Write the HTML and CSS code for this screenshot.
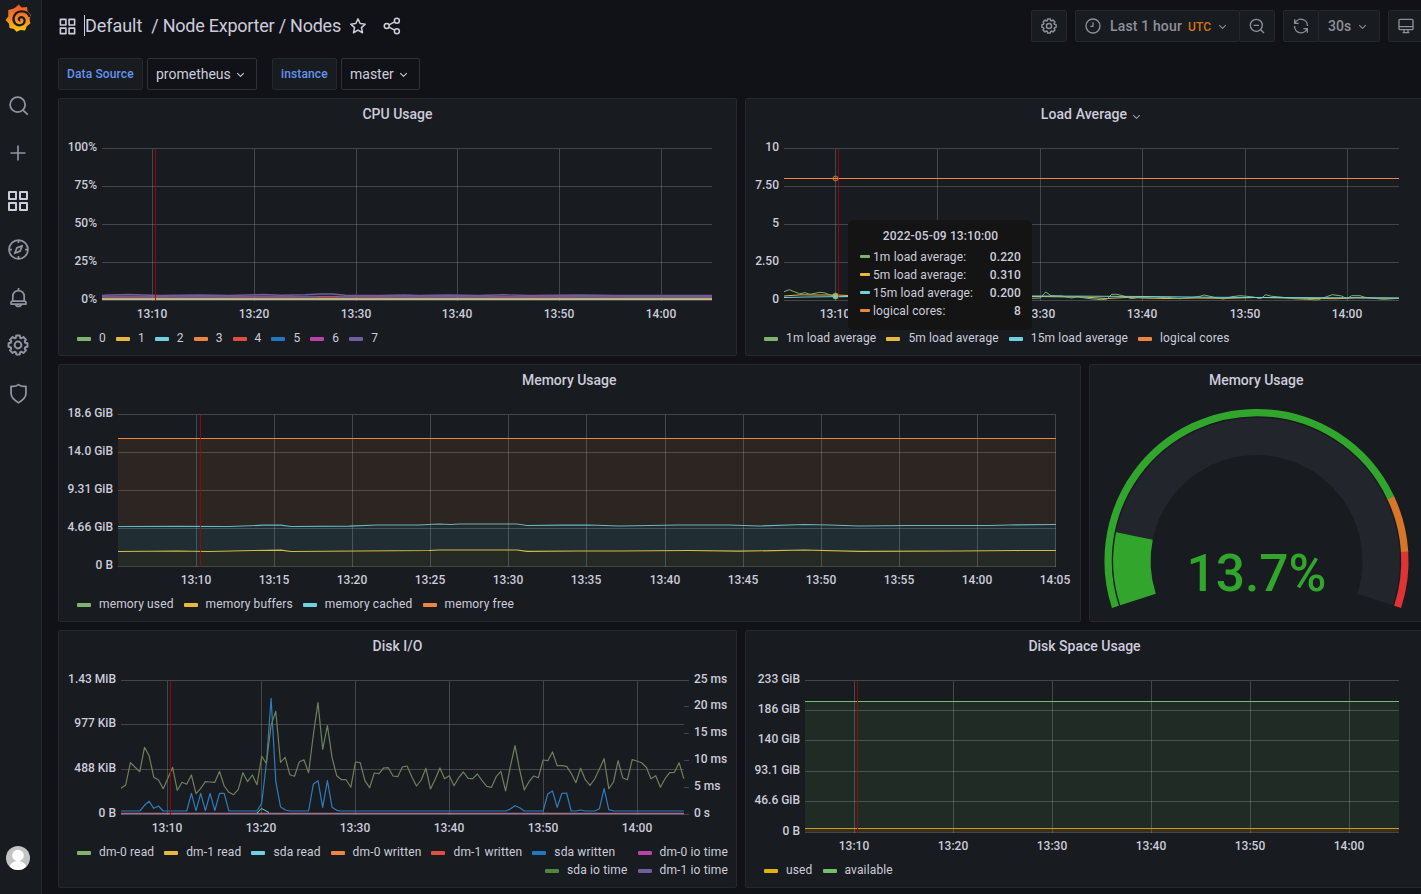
FILE: index.html
```
<!DOCTYPE html>
<html lang="en">
<head>
    <title>Node Exporter / Nodes - Grafana</title>
    <meta charset="UTF-8">
    <link rel="stylesheet" href="styles.css">
</head>
<body>
    <!-- Icon set -->
    <svg class="icon-defs">
        <symbol id="i-apps" viewBox="0 0 24 24"><path d="M3 3h7v7H3zM14 3h7v7h-7zM3 14h7v7H3zM14 14h7v7h-7z"/></symbol>
        <symbol id="i-search" viewBox="0 0 24 24"><circle cx="11" cy="11" r="8.6"/><path d="M17.2 17.2L22.5 22.5"/></symbol>
        <symbol id="i-plus" viewBox="0 0 24 24"><path d="M12 3v18M3 12h18"/></symbol>
        <symbol id="i-compass" viewBox="0 0 24 24"><circle cx="12" cy="12" r="10.8"/><path d="M12 1v3.5M12 19.5V23M1 12h3.500M19.500 12H23M16.300 7.700L13.800 13.800 7.700 16.300 10.200 10.200z"/></symbol>
        <symbol id="i-bell" viewBox="0 0 24 24"><path d="M12 1v3M5.500 16v-5.500a6.500 6.500 0 0 1 13 0V16M5 16h14a1.500 1.500 0 0 1 1.500 1.500V19.500h-17V17.500A1.500 1.500 0 0 1 5 16zM8.500 19.500a3.600 3.600 0 0 0 7 0"/></symbol>
        <symbol id="i-cog" viewBox="-12 -12 24 24">
            <path d="M9.420 1.830L7.270 2.220 6.710 3.570 7.960 5.370 5.370 7.960 3.570 6.710 2.220 7.270 1.830 9.420H-1.830L-2.220 7.270-3.570 6.710-5.370 7.960-7.960 5.370-6.710 3.570-7.270 2.220-9.420 1.830V-1.830L-7.270-2.220-6.710-3.570-7.960-5.370-5.370-7.960-3.570-6.710-2.220-7.270-1.830-9.420H1.830L2.220-7.270 3.570-6.710 5.370-7.960 7.960-5.370 6.710-3.570 7.270-2.220 9.420-1.830z"/>
            <circle r="3.4"/>
        </symbol>
        <symbol id="i-shield" viewBox="0 0 24 24"><path d="M12 1.800C9.500 3.800 6.500 4.300 3.500 3.800V12c0 4.500 3.500 7.500 8.500 10.500 5-3 8.500-6 8.500-10.500V3.800C17.500 4.300 14.500 3.800 12 1.800z"/></symbol>
        <symbol id="i-star" viewBox="0 0 24 24"><path d="M12 2.500l2.900 6.200 6.700.8-5 4.600 1.400 6.900-6-3.500-6 3.500 1.400-6.900-5-4.600 6.700-.8z"/></symbol>
        <symbol id="i-share" viewBox="0 0 24 24"><circle cx="5" cy="12" r="3.300"/><circle cx="18.500" cy="5" r="3.300"/><circle cx="18.500" cy="19" r="3.300"/><path d="M8 10.500l7.500-4M8 13.500l7.500 4"/></symbol>
        <symbol id="i-clock" viewBox="0 0 24 24"><circle cx="12" cy="12" r="10.500"/><path d="M12 6.500V12.500H8"/></symbol>
        <symbol id="i-zoom-out" viewBox="0 0 24 24"><circle cx="11" cy="11" r="9"/><path d="M17.500 17.500L22.500 22.500M7 11h8"/></symbol>
        <symbol id="i-sync" viewBox="0 0 24 24"><path d="M2.500 2v6h6M21.500 22v-6h-6M3 8a9.700 9.700 0 0 1 18.700 4M21 16a9.700 9.700 0 0 1-18.700-4"/></symbol>
        <symbol id="i-monitor" viewBox="0 0 24 24"><path d="M3 2h18a1.500 1.500 0 0 1 1.500 1.500V16a1.500 1.500 0 0 1-1.500 1.500H3A1.500 1.500 0 0 1 1.500 16V3.500A1.500 1.500 0 0 1 3 2zM1.500 13h21M9 17.500v4M15 17.500v4M7 22h10"/></symbol>
        <symbol id="i-angle" viewBox="0 0 24 24"><path d="M6 9.500l6 6 6-6"/></symbol>
    </svg>

    <div class="app">
        <nav class="sidebar">
            <svg class="logo" viewBox="0 0 26 28">
                <defs>
                    <linearGradient id="logo-fill" x1="0" y1="0" x2="0" y2="1">
                        <stop offset="0" stop-color="#f05a28"/>
                        <stop offset="0.5" stop-color="#f5822a"/>
                        <stop offset="1" stop-color="#fbca0a"/>
                    </linearGradient>
                </defs>
                <path fill="url(#logo-fill)" d="M13.800 0.500L16.600 3.600 22 3 22.600 7.200 25.800 11 24.600 15 25.300 19.500 21.800 22.300 20 26.500 15.500 26 11.500 27.800 9 24.900 4.500 24 4 19.800 0.500 16 3.300 12.500 3.300 6 8 4.800 10 3.800z"/>
                <path class="logo-swirl" d="M24.600 13C22.500 5.500 11 5.500 8.600 13.500c-1 5 3 8.300 6.800 7.700 4-.6 5.300-4.400 3.500-6.800-1.400-1.900-4.400-1.600-4.900.2-.3 1.200.6 1.900 1.300 1.700"/>
            </svg>
            <a class="nav-item"><svg><use href="#i-search"/></svg></a>
            <a class="nav-item nav-plus"><svg><use href="#i-plus"/></svg></a>
            <a class="nav-item active"><svg><use href="#i-apps"/></svg></a>
            <a class="nav-item"><svg><use href="#i-compass"/></svg></a>
            <a class="nav-item"><svg><use href="#i-bell"/></svg></a>
            <a class="nav-item nav-cog"><svg><use href="#i-cog"/></svg></a>
            <a class="nav-item"><svg><use href="#i-shield"/></svg></a>
            <svg class="avatar" viewBox="0 0 24 24">
                <clipPath id="avatar-clip"><circle cx="12" cy="12" r="12"/></clipPath>
                <g clip-path="url(#avatar-clip)">
                    <rect width="24" height="24" fill="#c4c4c4"/>
                    <circle cx="12" cy="9.500" r="5.800" fill="#fff"/>
                    <ellipse cx="12" cy="21.500" rx="8.500" ry="6.500" fill="#fff"/>
                </g>
            </svg>
        </nav>

        <main class="main">
            <header class="toolbar">
                <svg class="icon icon-apps"><use href="#i-apps"/></svg>
                <h1 class="page-title"><span class="folder">Default</span><span class="name">/ Node Exporter / Nodes</span></h1>
                <svg class="icon icon-star"><use href="#i-star"/></svg>
                <svg class="icon icon-share"><use href="#i-share"/></svg>
                <div class="toolbar-buttons">
                    <div class="btn-group"><button class="btn"><svg class="icon cog"><use href="#i-cog"/></svg></button></div>
                    <div class="btn-group">
                        <button class="btn btn-time"><svg class="icon"><use href="#i-clock"/></svg><span>Last 1 hour</span><span class="utc">UTC</span><svg class="angle"><use href="#i-angle"/></svg></button>
                        <button class="btn"><svg class="icon"><use href="#i-zoom-out"/></svg></button>
                    </div>
                    <div class="btn-group">
                        <button class="btn"><svg class="icon"><use href="#i-sync"/></svg></button>
                        <button class="btn btn-interval"><span>30s</span><svg class="angle"><use href="#i-angle"/></svg></button>
                    </div>
                    <div class="btn-group"><button class="btn"><svg class="icon"><use href="#i-monitor"/></svg></button></div>
                </div>
            </header>

            <div class="submenu">
                <label class="var-label var-source">Data Source</label>
                <div class="var-value var-prometheus">prometheus<svg class="angle"><use href="#i-angle"/></svg></div>
                <label class="var-label var-instance">instance</label>
                <div class="var-value var-master">master<svg class="angle"><use href="#i-angle"/></svg></div>
            </div>

            <div class="dashboard">
                <section class="panel half">
                    <h2 class="panel-title">CPU Usage</h2>
                    <svg class="graph" id="cpu"></svg>
                    <ul class="legend">
                        <li><i class="green"></i>0</li>
                        <li><i class="yellow"></i>1</li>
                        <li><i class="cyan"></i>2</li>
                        <li><i class="orange"></i>3</li>
                        <li><i class="red"></i>4</li>
                        <li><i class="blue"></i>5</li>
                        <li><i class="magenta"></i>6</li>
                        <li><i class="purple"></i>7</li>
                    </ul>
                </section>

                <section class="panel half">
                    <h2 class="panel-title with-menu">Load Average<svg class="angle"><use href="#i-angle"/></svg></h2>
                    <svg class="graph" id="load"></svg>
                    <ul class="legend">
                        <li><i class="green"></i>1m load average</li>
                        <li><i class="yellow"></i>5m load average</li>
                        <li><i class="cyan"></i>15m load average</li>
                        <li><i class="orange"></i>logical cores</li>
                    </ul>
                    <div class="tooltip">
                        <div class="tooltip-time">2022-05-09 13:10:00</div>
                        <div class="tooltip-row"><i class="green"></i>1m load average:<b>0.220</b></div>
                        <div class="tooltip-row"><i class="yellow"></i>5m load average:<b>0.310</b></div>
                        <div class="tooltip-row"><i class="cyan"></i>15m load average:<b>0.200</b></div>
                        <div class="tooltip-row"><i class="orange"></i>logical cores:<b>8</b></div>
                    </div>
                </section>

                <section class="panel wide">
                    <h2 class="panel-title">Memory Usage</h2>
                    <svg class="graph" id="memory"></svg>
                    <ul class="legend">
                        <li><i class="green"></i>memory used</li>
                        <li><i class="yellow"></i>memory buffers</li>
                        <li><i class="cyan"></i>memory cached</li>
                        <li><i class="orange"></i>memory free</li>
                    </ul>
                </section>

                <section class="panel narrow">
                    <h2 class="panel-title">Memory Usage</h2>
                    <svg class="gauge">
                        <path class="gauge-track" d="M49 203.500A124.600 124.600 0 1 1 286 203.500"/>
                        <path class="gauge-value" pathLength="1000" stroke-dasharray="137 2000" d="M49 203.500A124.600 124.600 0 1 1 286 203.500"/>
                        <path class="gauge-ring high" pathLength="100" stroke-dasharray="0 89.900 200" d="M26.400 210.900A148.400 148.400 0 1 1 308.600 210.900"/>
                        <path class="gauge-ring mid" pathLength="100" stroke-dasharray="0 79.900 10.100 200" d="M26.400 210.900A148.400 148.400 0 1 1 308.600 210.900"/>
                        <path class="gauge-ring low" pathLength="100" stroke-dasharray="80 200" d="M26.400 210.900A148.400 148.400 0 1 1 308.600 210.900"/>
                        <text class="gauge-text" x="167.500" y="195">13.7%</text>
                    </svg>
                </section>

                <section class="panel half">
                    <h2 class="panel-title">Disk I/O</h2>
                    <svg class="graph short" id="diskio"></svg>
                    <ul class="legend">
                        <li><i class="green"></i>dm-0 read</li>
                        <li><i class="yellow"></i>dm-1 read</li>
                        <li><i class="cyan"></i>sda read</li>
                        <li><i class="orange"></i>dm-0 written</li>
                        <li><i class="red"></i>dm-1 written</li>
                        <li><i class="blue"></i>sda written</li>
                        <li class="push"><i class="magenta"></i>dm-0 io time</li>
                    </ul>
                    <ul class="legend">
                        <li class="push"><i class="dark-green"></i>sda io time</li>
                        <li><i class="purple"></i>dm-1 io time</li>
                    </ul>
                </section>

                <section class="panel half">
                    <h2 class="panel-title">Disk Space Usage</h2>
                    <svg class="graph" id="diskspace"></svg>
                    <ul class="legend">
                        <li><i class="amber"></i>used</li>
                        <li><i class="light-green"></i>available</li>
                    </ul>
                </section>
            </div>
        </main>
    </div>
    <script src="charts.js"></script>
</body>
</html>
```

FILE: styles.css
```
* {
    box-sizing: border-box;
}
body {
    margin: 0;
    height: 894px;
    overflow: hidden;
    background: #111217;
    color: #ccccdc;
    font-family: Roboto, sans-serif;
    font-size: 14px;
}
svg {
    fill: none;
    stroke: currentColor;
    stroke-width: 2;
    stroke-linejoin: round;
    display: block;
    flex: none;
}
.icon-defs {
    display: none;
}
.app {
    display: flex;
    height: 894px;
}

/* Sidebar */
.sidebar {
    flex: none;
    width: 42px;
    background: #181b1f;
    border-right: 1px solid #25272c;
    display: flex;
    flex-direction: column;
    padding: 4px 0 24px;
}
.logo {
    width: 26px;
    height: 28px;
    margin: 0 0 49px 5px;
    stroke: none;
}
.logo-swirl {
    stroke: #181b1f;
    stroke-width: 2.3;
}
.nav-item {
    width: 36px;
    height: 48px;
    display: flex;
    align-items: center;
    justify-content: center;
    color: #9193a0;
}
.nav-item svg {
    width: 21px;
    height: 21px;
}
.nav-item.nav-plus svg {
    width: 20px;
    height: 20px;
}
.nav-item.active {
    color: #ccccdc;
}
.nav-item.active svg {
    width: 24px;
    height: 24px;
}
.nav-item.nav-cog svg {
    width: 24px;
    height: 24px;
}
.avatar {
    width: 24px;
    height: 24px;
    margin: auto 0 0 6px;
    stroke: none;
}

/* Toolbar */
.main {
    flex: none;
    width: 1382px;
    padding-left: 16px;
}
.toolbar {
    height: 52px;
    display: flex;
    align-items: center;
}
.icon {
    width: 16px;
    height: 16px;
}
.icon-apps {
    width: 19px;
    height: 19px;
    margin: 0 7px 0 0;
}
.page-title {
    margin: -1px 0 0;
    display: flex;
    align-items: center;
    gap: 9px;
    font-size: 18px;
    font-weight: 400;
    line-height: 21px;
}
.folder {
    border-left: 1px solid #ccccdc;
    letter-spacing: -0.05px;
}
.name {
    letter-spacing: -0.24px;
}
.icon-star {
    width: 18px;
    height: 18px;
    margin: 0 16px 0 8px;
}
.icon-share {
    width: 18px;
    height: 18px;
}
.toolbar-buttons {
    margin-left: auto;
    display: flex;
    gap: 8px;
}
.btn-group {
    display: flex;
}
.btn {
    height: 32px;
    width: 36px;
    padding: 0 9px;
    display: flex;
    align-items: center;
    background: #181b1f;
    border: 1px solid #25272c;
    border-radius: 2px;
    color: #8e8f9b;
    font-family: inherit;
    font-size: 14px;
    font-weight: 500;
}
.btn + .btn {
    border-left: none;
    border-radius: 0 2px 2px 0;
    width: 35px;
}
.btn .cog {
    width: 18px;
    height: 18px;
    margin: 0 -1px;
}
.btn-time {
    width: 165px;
    letter-spacing: 0.15px;
}
.btn-time .icon {
    margin-right: 9px;
}
.btn span {
    margin-top: -1px;
}
.btn .utc {
    margin: 1px 0 0 6px;
    color: #d9730f;
    font-size: 12px;
}
.angle {
    width: 13px;
    height: 13px;
}
.btn .angle {
    margin-left: 5px;
}
.btn + .btn-interval {
    width: 61px;
}

/* Template variables */
.submenu {
    display: flex;
    padding-top: 6px;
    height: 46px;
}
.var-label,
.var-value {
    height: 32px;
    display: flex;
    align-items: center;
    padding: 0 8px;
    border: 1px solid #25272c;
    border-radius: 2px;
}
.var-label {
    background: #181b1f;
    color: #6394f0;
    font-size: 12px;
    font-weight: 500;
    letter-spacing: 0.13px;
    margin-right: 4px;
}
.var-value {
    border-color: #2f3137;
}
.var-value .angle {
    margin-left: 3px;
}
.var-source {
    width: 85px;
}
.var-prometheus {
    width: 110px;
    margin-right: 15px;
}
.var-instance {
    width: 65px;
}
.var-master {
    width: 79px;
}

/* Panels */
.dashboard {
    width: 1366px;
    display: grid;
    grid-template-columns: repeat(24, minmax(0, 1fr));
    grid-auto-rows: 258px;
    gap: 8px;
}
.panel {
    position: relative;
    background: #181b1f;
    border: 1px solid #25272c;
    border-radius: 2px;
}
.half {
    grid-column: span 12;
}
.wide {
    grid-column: span 18;
}
.narrow {
    grid-column: span 6;
}
.panel-title {
    margin: 0;
    height: 31px;
    line-height: 31px;
    text-align: center;
    font-size: 14px;
    font-weight: 500;
}
.with-menu {
    display: flex;
    justify-content: center;
    align-items: center;
    padding-left: 15px;
    letter-spacing: 0.08px;
}
.with-menu .angle {
    margin: 3px 0 0 3px;
    color: #9a9ba8;
}
.graph {
    width: 100%;
    height: 199px;
    stroke: none;
}
.graph.short {
    height: 181px;
}
.graph text {
    fill: #ccccdc;
    font-size: 12px;
    font-weight: 500;
}
.grid-line {
    stroke: #c8c8c8;
    stroke-opacity: 0.25;
    stroke-width: 1;
    shape-rendering: crispEdges;
}
.crosshair {
    stroke: #aa0000;
    stroke-opacity: 0.85;
    stroke-width: 1;
    shape-rendering: crispEdges;
}
.line {
    fill: none;
    stroke-width: 1;
}
.legend {
    list-style: none;
    margin: 0;
    padding: 0 8px 0 18px;
    height: 18px;
    display: flex;
    align-items: center;
    gap: 10px;
    font-size: 12px;
    letter-spacing: 0.14px;
    white-space: nowrap;
}
.legend li {
    display: flex;
    align-items: center;
}
.legend i {
    width: 14px;
    height: 4px;
    border-radius: 1px;
    margin: 2px 8px 0 0;
}
.legend .push {
    margin-left: auto;
}
.green { background: #7eb26d; }
.yellow { background: #eab839; }
.cyan { background: #6ed0e0; }
.orange { background: #ef843c; }
.red { background: #e24d42; }
.blue { background: #1f78c1; }
.magenta { background: #ba43a9; }
.purple { background: #705da0; }
.dark-green { background: #508642; }
.amber { background: #e0b400; }
.light-green { background: #73bf69; }

.tooltip {
    position: absolute;
    left: 102px;
    top: 121px;
    width: 184px;
    height: 110px;
    padding: 7px 11px 0 12px;
    border-radius: 5px;
    background: #141414;
    font-size: 12px;
    line-height: 18px;
    letter-spacing: 0.13px;
}
.tooltip-time {
    margin-bottom: 3px;
    text-align: center;
    font-weight: 500;
}
.tooltip-row {
    display: flex;
    align-items: center;
}
.tooltip-row i {
    width: 10px;
    height: 3px;
    border-radius: 1px;
    margin: -1px 3px 0 0;
}
.tooltip-row b {
    margin-left: auto;
    font-weight: 500;
}

/* Gauge */
.gauge {
    width: 335px;
    height: 220px;
    margin-left: -0.5px;
    stroke: none;
}
.gauge-track {
    stroke: #22252b;
    stroke-width: 37.4;
}
.gauge-value {
    stroke: #32a62c;
    stroke-width: 37.4;
}
.gauge-ring {
    stroke-width: 7.3;
}
.low { stroke: #32a62c; }
.mid { stroke: #d67628; }
.high { stroke: #df3334; }
.gauge-text {
    fill: #32a62c;
    font-size: 51.5px;
    font-weight: 500;
    text-anchor: middle;
}
```

FILE: charts.js
```
const NS = 'http://www.w3.org/2000/svg';

function add(svg, tag, attrs, text) {
    const el = document.createElementNS(NS, tag);
    for (const key in attrs) el.setAttribute(key, attrs[key]);
    if (text) el.textContent = text;
    svg.appendChild(el);
}

function drawGraph(id, c) {
    const svg = document.getElementById(id);
    const bottom = c.y[c.y.length - 1][0];
    const top = c.y[0][0];

    // filled areas go under the grid
    (c.areas || []).forEach(a => {
        add(svg, 'path', { d: a.d, fill: a.color, 'fill-opacity': a.opacity || 0.1 });
    });
    c.y.forEach(([y, label]) => {
        add(svg, 'line', { x1: c.left, x2: c.right, y1: y, y2: y, class: 'grid-line' });
        add(svg, 'text', { x: c.left - 5, y: y + 2.4, 'text-anchor': 'end' }, label);
    });
    c.x.forEach(([x, label]) => {
        add(svg, 'line', { x1: x, x2: x, y1: top, y2: bottom, class: 'grid-line' });
        if (label) add(svg, 'text', { x: x - 0.5, y: bottom + 17.5, 'text-anchor': 'middle' }, label);
    });
    (c.y2 || []).forEach(([y, label]) => {
        add(svg, 'line', { x1: c.right, x2: c.right + 5, y1: y, y2: y, class: 'grid-line' });
        add(svg, 'text', { x: c.right + 10, y: y + 2.4 }, label);
    });
    c.lines.forEach(l => {
        add(svg, 'path', {
            d: l.d, class: 'line', stroke: l.color,
            'stroke-opacity': l.opacity || 1,
            style: 'stroke-width:' + (l.width || 1)
        });
    });
    add(svg, 'line', { x1: c.cursor, x2: c.cursor, y1: top, y2: bottom, class: 'crosshair' });
    (c.dots || []).forEach(([x, y, color, fill]) => {
        add(svg, 'circle', { cx: x, cy: y, r: 2.5, stroke: color, fill: color, 'fill-opacity': fill, 'stroke-opacity': 0.7, 'stroke-width': 1 });
    });
}

// evenly spaced samples, three units per pixel
function samples(values, left, step, offset) {
    return 'M' + values.map((v, i) => (left + i * step).toFixed(1) + ' ' + (v / 3 + offset).toFixed(1)).join('L');
}

// flat list of x, y pairs, three units per pixel
function pairs(list, dx, dy) {
    const out = [];
    for (let i = 0; i < list.length; i += 2) {
        out.push((list[i] / 3 + dx).toFixed(1) + ' ' + (list[i + 1] / 3 + dy).toFixed(1));
    }
    return out.join('L');
}

function ticks(start, step, labels) {
    return labels.map((label, i) => [Math.floor(start + i * step) + 0.5, label]);
}

const TENS = ['13:10', '13:20', '13:30', '13:40', '13:50', '14:00'];

const cpuTop = 'M43 165.500L50 165 70 164.500 100 165.500 140 165 170 165.500 205 164.500 222 165.300 246 164.800 262 164 274 164 286 165.300 320 165.500 345 165 360 165.500 390 165 420 165.500 445 164.700 470 165.500 520 165 560 165.500 653 165.500';
drawGraph('cpu', {
    left: 43, right: 653, cursor: 96.5,
    y: [[18.5, '100%'], [56.5, '75%'], [94.5, '50%'], [132.5, '25%'], [170.5, '0%']],
    x: ticks(93.6, 101.7, TENS),
    areas: [{ d: 'M43 165.500H653V170H43z', color: '#705da0', opacity: 0.4 }],
    lines: [
        { d: 'M43 169.500H653', color: '#b5b98a' },
        { d: 'M43 168.500H653', color: '#b9b480' },
        { d: 'M43 167.700H653', color: '#ef843c', opacity: 0.4 },
        { d: 'M43 167.200H653', color: '#e24d42', opacity: 0.4 },
        { d: 'M43 166.500H653', color: '#5360b5' },
        { d: 'M258 166.500H280', color: '#e24d42', opacity: 0.6 },
        { d: 'M43 166H110M175 166H235M290 166H335M430 166H520', color: '#ba43a9', opacity: 0.45 },
        { d: cpuTop, color: '#705da0', width: 1.4 }
    ]
});

const load1m = 'M' + pairs([117, 485, 133, 479, 148, 485, 164, 491, 180, 488, 195, 493, 210, 490, 225, 487, 240, 489, 256, 495, 271, 500,
    400, 500, 600, 502, 860, 505, 886, 504, 902, 486, 918, 497, 950, 498, 980, 504, 1000, 499, 1005, 501], -1, 0) +
    'L' + pairs([0, 82, 30, 86, 65, 89, 82, 87, 95, 73, 110, 73, 128, 77, 155, 86, 175, 82, 187, 83, 220, 84, 260, 82, 300, 86, 340, 82,
    360, 79, 372, 75, 390, 79, 410, 84, 430, 87, 455, 80, 480, 77, 500, 79, 520, 81, 542, 86, 557, 74, 575, 79, 600, 81, 640, 86,
    680, 88, 712, 90, 740, 80, 757, 74, 785, 78, 800, 86, 815, 77, 840, 77, 855, 82, 910, 88, 957, 85], 334, 140);
drawGraph('load', {
    left: 38, right: 653, cursor: 92.5,
    y: [[18.5, '10'], [56.5, '7.50'], [94.5, '5'], [132.5, '2.50'], [170.5, '0']],
    // the tooltip sits over the second label
    x: ticks(89.5, 102.4, ['13:10', '', '13:30', '13:40', '13:50', '14:00']),
    lines: [
        { d: 'M38 48.500H653', color: '#ef843c' },
        { d: 'M38 166L55 164.800 70 165 90 165 102 165.500 290 166.500 340 167.200 360 168.500 380 167.500 420 168.500 450 168 480 168.300 510 167.500 540 168 570 168.500 590 168.700 610 167.800 653 168.300', color: '#eab839' },
        { d: load1m, color: '#7eb26d' },
        { d: 'M38 167.500L60 167 102 166.500 290 166 340 166.200 400 166.500 470 167.300 653 168', color: '#6ed0e0' }
    ],
    dots: [[89.5, 48.5, '#ef843c', 0.25], [89.5, 165.5, '#eab839', 0.4], [89.5, 166.5, '#7ec8a8', 0.9]]
});

const cached = '59 130.500L118 130.300 170 130.500 205 129.200 222 129.200 232 130.500 290 130.200 318 129 360 129 380 128 392 128.500 400 128 458 128 468 129.500 505 129.200 530 129 560 130 620 129 670 129 700 130 745 128.500 770 129 800 130 850 129.500 930 129.500 950 129 997 128.500';
const buffers = '59 155.500L118 155 150 155.500 195 154.500 222 154.200 232 155.500 300 155 370 154.500 380 154 458 154 468 155.300 520 155 560 155 630 154.500 680 155.200 745 154 800 155.300 900 155 960 154.500 997 154.500';
drawGraph('memory', {
    left: 59, right: 997, cursor: 141.5,
    y: [[18.5, '18.6 GiB'], [56.5, '14.0 GiB'], [94.5, '9.31 GiB'], [132.5, '4.66 GiB'], [170.5, '0 B']],
    x: ticks(137.5, 78.09, ['13:10', '13:15', '13:20', '13:25', '13:30', '13:35', '13:40', '13:45', '13:50', '13:55', '14:00', '14:05']),
    areas: [
        { d: 'M59 155H997V170H59z', color: '#a5b260' },
        { d: 'M59 130H997V155H59z', color: '#6ed0e0' },
        { d: 'M59 42.500H997V130H59z', color: '#ef843c' }
    ],
    lines: [
        { d: 'M' + buffers, color: '#d6bb45', width: 1.2 },
        { d: 'M' + cached, color: '#6ed0e0', opacity: 0.85, width: 1.2 },
        { d: 'M59 42.500H997', color: '#ef843c' }
    ]
});

const ioTime = [385, 375, 308, 322, 335, 262, 287, 352, 360, 386, 355, 322, 391, 367, 373, 345, 401, 385, 365, 366,
    367, 334, 378, 397, 404, 388, 338, 365, 345, 374, 289, 310, 195, 154, 307, 292, 344, 349, 306, 299,
    338, 225, 128, 268, 197, 293, 347, 359, 359, 382, 306, 308, 362, 383, 339, 341, 324, 323, 348, 350,
    321, 318, 350, 378, 360, 325, 387, 358, 324, 356, 347, 377, 353, 336, 355, 356, 342, 362, 379, 382,
    350, 334, 393, 320, 257, 330, 390, 365, 348, 353, 300, 302, 276, 317, 317, 319, 340, 368, 325, 359,
    376, 357, 327, 296, 386, 366, 302, 354, 359, 299, 303, 308, 322, 356, 347, 382, 356, 338, 337, 308, 356];

// sda written idles just above zero, only the bursts are listed
const written = new Array(121).fill(453);
const bursts = {
    5: [436, 424, 445, 438],
    15: [400, 452, 400, 452, 400, 452, 400, 400],
    30: [430, 310, 115, 365, 440, 450],
    41: [373, 362, 442, 362, 442, 451],
    83: [447, 437, 443],
    91: [402, 393, 442, 400, 399],
    98: [450],
    102: [446, 386, 449]
};
for (const start in bursts) {
    bursts[start].forEach((v, i) => { written[Number(start) + i] = v; });
}

drawGraph('diskio', {
    left: 62, right: 625, cursor: 111.5,
    y: [[18.5, '1.43 MiB'], [62.5, '977 KiB'], [107.5, '488 KiB'], [152.5, '0 B']],
    y2: [[18.5, '25 ms'], [44.5, '20 ms'], [71.5, '15 ms'], [98.5, '10 ms'], [125.5, '5 ms'], [152.5, '0 s']],
    x: ticks(108.5, 94, TENS),
    lines: [
        { d: samples(written, 62, 4.69, -2), color: '#2f7cbd', width: 1.2 },
        { d: samples(ioTime, 62, 4.69, -2), color: '#6f805c', width: 1.2 },
        { d: 'M62 151.500H625', color: '#a0718f', width: 1.6 },
        { d: 'M198 151L202.500 146.500 210 150.500', color: '#6ed0c8' }
    ]
});

drawGraph('diskspace', {
    left: 59, right: 653, cursor: 111.5,
    y: [[18.5, '233 GiB'], [48.5, '186 GiB'], [78.5, '140 GiB'], [109.5, '93.1 GiB'], [139.5, '46.6 GiB'], [170.5, '0 B']],
    x: ticks(108.5, 99, TENS),
    areas: [
        { d: 'M59 39.500H653V166H59z', color: '#73bf69' },
        { d: 'M59 166H653V170H59z', color: '#ff9830', opacity: 0.15 }
    ],
    lines: [
        { d: 'M59 39.500H653', color: '#73bf69' },
        { d: 'M59 166.500H653', color: '#c79f06' }
    ]
});
```
